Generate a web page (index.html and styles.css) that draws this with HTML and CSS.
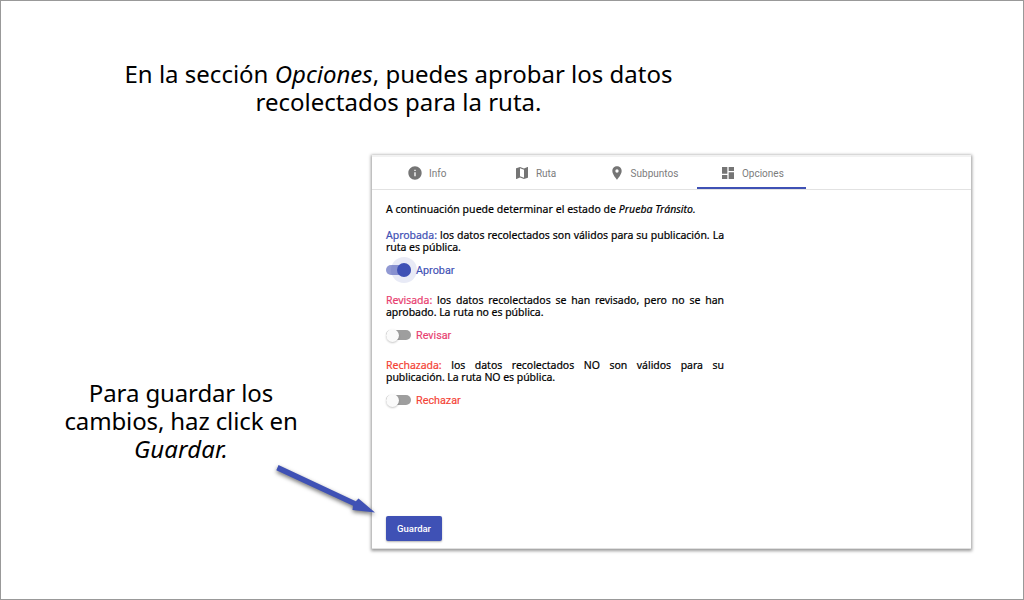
FILE: index.html
```html
<!DOCTYPE html>
<html lang="es">
<head>
<meta charset="utf-8">
<title>Opciones de la ruta</title>
<link rel="stylesheet" href="styles.css">
</head>
<body>
<main class="slide">
  <h1 class="headline"><span class="line">En la sección <em>Opciones</em>, puedes aprobar los datos</span><span class="line">recolectados para la ruta.</span></h1>
  <div class="content">
    <p class="note"><span class="line">Para guardar los</span><span class="line">cambios, haz click en</span><em class="line slanted">Guardar.</em></p>
    <section class="panel">
      <nav class="tabs">
        <a class="tab"><svg class="icon" viewBox="0 0 24 24"><path d="M12 2C6.480 2 2 6.480 2 12s4.480 10 10 10 10-4.480 10-10S17.520 2 12 2zm1 15h-2v-6h2v6zm0-8h-2V7h2v2z"/></svg>Info</a>
        <a class="tab"><svg class="icon" viewBox="0 0 24 24"><path d="M20.500 3l-.160.030L15 5.100 9 3 3.360 4.900c-.210.070-.360.250-.360.480V20.500c0 .280.220.500.500.500l.160-.030L9 18.900l6 2.100 5.640-1.900c.210-.070.360-.250.360-.480V3.500c0-.280-.220-.500-.500-.500zM15 19l-6-2.110V5l6 2.110V19z"/></svg>Ruta</a>
        <a class="tab"><svg class="icon" viewBox="0 0 24 24"><path d="M12 2C8.130 2 5 5.130 5 9c0 5.250 7 13 7 13s7-7.750 7-13c0-3.870-3.130-7-7-7zm0 9.500a2.500 2.500 0 0 1 0-5 2.500 2.500 0 0 1 0 5z"/></svg>Subpuntos</a>
        <a class="tab active"><svg class="icon" viewBox="0 0 24 24"><path d="M3 13h8V3H3v10zm0 8h8v-6H3v6zm10 0h8V11h-8v10zm0-18v6h8V3h-8z"/></svg>Opciones</a>
      </nav>
      <div class="body">
        <p class="intro">A continuación puede determinar el estado de <em>Prueba Tránsito.</em></p>
        <div class="option blue">
          <p class="text"><span class="row"><b>Aprobada:</b> los datos recolectados son válidos para su publicación. La</span><span class="last">ruta es pública.</span></p>
          <label class="switch on"><span class="track"><span class="thumb"></span></span>Aprobar</label>
        </div>
        <div class="option pink">
          <p class="text"><span class="row"><b>Revisada:</b> los datos recolectados se han revisado, pero no se han</span><span class="last">aprobado. La ruta no es pública.</span></p>
          <label class="switch"><span class="track"><span class="thumb"></span></span>Revisar</label>
        </div>
        <div class="option red">
          <p class="text"><span class="row"><b>Rechazada:</b> los datos recolectados NO son válidos para su</span><span class="last">publicación. La ruta NO es pública.</span></p>
          <label class="switch"><span class="track"><span class="thumb"></span></span>Rechazar</label>
        </div>
        <button class="save">Guardar</button>
      </div>
    </section>
  </div>
  <svg class="arrow" viewBox="0 0 120 70"><path d="M8.500 15L6.300 20.200 83 55.700 82.500 60 105 62.500 88.500 48.500 85.800 51.200z"/></svg>
</main>
</body>
</html>
```
FILE: styles.css
```css
* { box-sizing: border-box; }
body { margin: 0; font-family: "Noto Sans", "Open Sans", sans-serif; color: #000; }
.slide { position: relative; width: 1024px; height: 600px; padding: 59px 52px 0 0; border: 1px solid #999; background: #fff; overflow: hidden; }
.headline { width: 795px; margin: 0; font-size: 24px; line-height: 28px; font-weight: 400; text-align: center; white-space: nowrap; }
.line { display: block; height: 28px; }
.content { display: flex; justify-content: space-between; margin-top: 39px; }
.note { width: 360px; margin: 0; padding-top: 224px; font-size: 24px; line-height: 28px; letter-spacing: -.12px; text-align: center; white-space: nowrap; }
.slanted { letter-spacing: .1px; }
.panel { flex: none; width: 599px; height: 394px; border-top: 2px solid #f2f2f2; border-bottom: 1px solid #e0e0e0; background: #fff; box-shadow: 0 1px 3px 1px rgba(0,0,0,.4); }
.tabs { display: flex; height: 33px; border-bottom: 1px solid #e2e2e2; font-family: Roboto, sans-serif; font-size: 10px; color: #7c7c7c; }
.tab { display: flex; align-items: center; justify-content: center; gap: 6px; width: 108.400px; height: 32px; padding-left: 1px; }
.active { border-bottom: 2px solid #3f51b5; padding-top: 2px; }
.icon { width: 16px; height: 16px; fill: #757575; }
.body { display: flex; flex-direction: column; align-items: flex-start; height: 358px; padding: 13px 14px 7px; font-size: 10.500px; }
.body p { margin: 0; line-height: 12px; -webkit-text-stroke: .2px currentColor; letter-spacing: -.02px; }
.intro { white-space: nowrap; }
.body .intro { letter-spacing: .04px; }
.option { width: 338px; height: 65px; padding-top: 14px; }
.text span { display: block; white-space: nowrap; }
.text .row { text-align: justify; text-align-last: justify; }
.text .last { letter-spacing: -.04px; }
.text b { font-weight: 400; }
.blue b, .blue .switch { color: #3f51b5; }
.pink b, .pink .switch { color: #e83e70; }
.red b, .red .switch { color: #f44336; }
.switch { display: flex; align-items: center; gap: 5px; height: 14px; margin-top: 10px; font-family: Roboto, sans-serif; font-size: 10.800px; -webkit-text-stroke: .15px currentColor; }
.track { display: flex; align-items: center; width: 25px; height: 10px; border-radius: 5px; background: #9e9e9e; }
.thumb { flex: none; width: 13px; height: 13px; border-radius: 50%; background: #fafafa; box-shadow: 0 1px 2px rgba(0,0,0,.22); }
.on .track { justify-content: flex-end; background: #9199d3; }
.on .thumb { width: 14px; height: 14px; background: #3f51b5; box-shadow: 0 0 0 6px rgba(63,81,181,.12); }
.save { width: 56px; height: 25px; margin-top: auto; padding: 0; border: 0; border-radius: 2px; background: #3f51b5; color: #fff; font: 500 9.500px Roboto, sans-serif; box-shadow: 0 1px 2px rgba(0,0,0,.3); }
.arrow { position: absolute; left: 269px; top: 449px; width: 120px; height: 70px; fill: #3f51b5; filter: drop-shadow(0 2px 2px rgba(0,0,0,.55)); }
```
